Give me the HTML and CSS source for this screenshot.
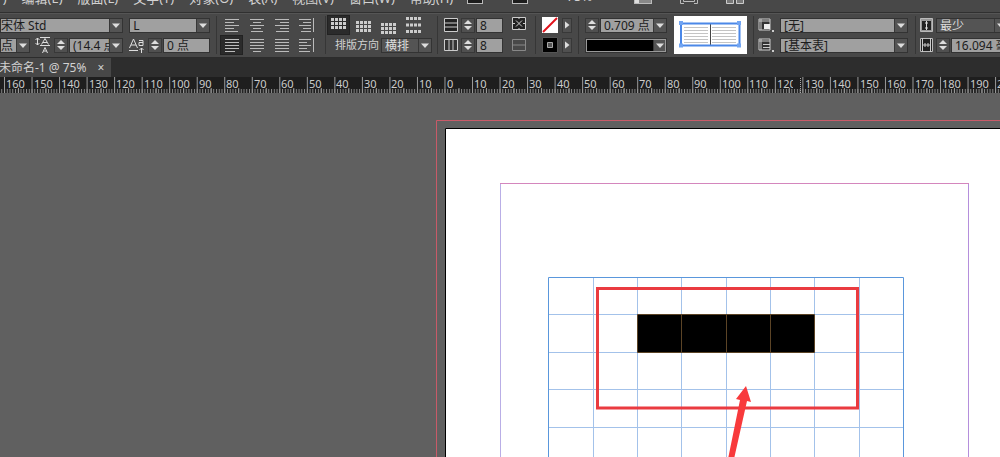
FILE: index.html
```html
<!DOCTYPE html>
<html lang="zh-CN">
<head>
<meta charset="utf-8">
<title>未命名-1 @ 75%</title>
<link rel="stylesheet" href="styles.css">
</head>
<body>
<div class="app">
  <header class="menubar">
    <nav class="menus">
      <button>文件(F)</button><button>编辑(E)</button><button>版面(L)</button><button>文字(T)</button><button>对象(O)</button><button>表(A)</button><button>视图(V)</button><button>窗口(W)</button><button>帮助(H)</button>
    </nav>
    <div class="apps">
      <button aria-label="Bridge"><svg width="16" height="16"><rect x=".5" y=".5" width="15" height="15" fill="#1c1c1c" stroke="#bbb"/></svg></button>
      <button aria-label="Stock"><svg width="16" height="16"><rect x=".5" y=".5" width="15" height="15" fill="#1c1c1c" stroke="#bbb"/></svg></button>
    </div>
    <button class="zoom">75%</button>
    <div class="views">
      <button aria-label="视图选项"><svg width="18" height="16"><rect x=".5" y=".5" width="17" height="15" fill="#888" stroke="#bbb"/><path d="M1 15h4v-4H1z" fill="#ddd"/></svg></button>
      <button aria-label="屏幕模式"><svg width="18" height="16" fill="none" stroke="#bbb"><path d="M3.500 0v13.500h11V0M.5 12v3.500H4M17.500 12v3.500H14"/></svg></button>
      <button aria-label="排列文档"><svg width="18" height="16"><path d="M.5.5h7v15h-7zM10.500.5h7v15h-7z" fill="#777" stroke="#ccc"/></svg></button>
    </div>
  </header>

  <section class="toolbar">
    <div class="group type">
      <div class="row">
        <select class="combo family" aria-label="字体"><option>宋体 Std</option></select>
        <select class="combo weight" aria-label="字体样式"><option>L</option></select>
      </div>
      <div class="row">
        <select class="combo size" aria-label="字体大小"><option>点</option></select>
        <svg class="glyph" width="16" height="16" fill="none" stroke="#ddd"><path d="M5 .5h10M5 8.500h10M2.500 1v7M.5 3l2-2 2 2M.5 6l2 2 2-2M6.500 7.500 10 1.500l3.500 6M8 5.500h4M7.500 16 10 10.500l2.500 5.500M8.500 14h3"/></svg>
        <span class="spin"><button aria-label="增加行距"></button><button aria-label="减少行距"></button></span>
        <select class="combo leading" aria-label="行距"><option>(14.4 点)</option></select>
        <svg class="glyph kern" width="16" height="16" fill="none" stroke="#ddd"><path d="M.5 11 4.500 2l4 9M2 8h5M0 13.500h9M10 3.500h4v5h-4v-3h4M12.500 16v-5M10.500 13l2-2 2 2"/></svg>
        <span class="spin"><button aria-label="上移基线"></button><button aria-label="下移基线"></button></span>
        <input class="field shift" aria-label="基线偏移" value="0 点">
      </div>
    </div>

    <div class="group align">
      <div class="row">
        <button aria-label="左对齐"><svg width="14" height="14"><path d="M0 1.500h14M0 4.500h9M0 7.500h14M0 10.500h9M0 13.500h13"/></svg></button>
        <button aria-label="居中对齐"><svg width="14" height="14"><path d="M0 1.500h14M3 4.500h8M0 7.500h14M3 10.500h8M1 13.500h12"/></svg></button>
        <button aria-label="右对齐"><svg width="14" height="14"><path d="M0 1.500h14M5 4.500h9M0 7.500h14M5 10.500h9M1 13.500h13"/></svg></button>
        <button aria-label="朝向书脊对齐"><svg width="16" height="14"><path d="M0 1.500h12M4 4.500h8M0 7.500h12M4 10.500h8M2 13.500h10M14.500 0v14"/></svg></button>
      </div>
      <div class="row">
        <button class="on" aria-label="双齐末行齐左"><svg width="14" height="14"><path d="M0 1.500h14M0 4.500h14M0 7.500h14M0 10.500h14M0 13.500h10"/></svg></button>
        <button aria-label="双齐末行居中"><svg width="14" height="14"><path d="M0 1.500h14M0 4.500h14M0 7.500h14M0 10.500h14M3 13.500h8"/></svg></button>
        <button aria-label="全部强制双齐"><svg width="14" height="14"><path d="M0 1.500h14M0 4.500h14M0 7.500h14M0 10.500h14M0 13.500h14"/></svg></button>
        <button aria-label="背向书脊对齐"><svg width="16" height="14"><path d="M0 1.500h12M0 4.500h8M0 7.500h12M0 10.500h8M0 13.500h11M14.500 0v14"/></svg></button>
      </div>
    </div>

    <div class="group cells">
      <div class="row">
        <button class="on" aria-label="上对齐"><svg width="16" height="16"><path d="M0 2.500h16M0 6.500h16M0 10.500h16"/></svg></button>
        <button aria-label="居中对齐单元格"><svg width="16" height="16"><path d="M0 5.500h16M0 9.500h16M0 13.500h16"/></svg></button>
        <button aria-label="下对齐"><svg width="16" height="18"><path d="M0 8.500h16M0 12.500h16M0 16.500h16"/></svg></button>
        <button aria-label="撑满"><svg width="16" height="18"><path d="M0 2.500h16M0 9h16M0 15.500h16"/></svg></button>
      </div>
      <div class="row">
        <label for="dir">排版方向</label>
        <select id="dir" class="combo dark dir"><option>横排</option></select>
      </div>
    </div>

    <div class="group counts">
      <div class="row">
        <svg class="glyph" width="14" height="14" fill="#222" stroke="#ccc"><path d="M.5.5h13v13H.5zM0 5h14M0 9h14"/></svg>
        <span class="spin"><button aria-label="增加行数"></button><button aria-label="减少行数"></button></span>
        <input class="field count" aria-label="行数" value="8">
        <button class="plain" aria-label="合并单元格"><svg width="14" height="16" fill="none" stroke="#ccc"><path d="M.5.5h13v12H.5z" fill="#222"/><path d="m4 3.500 6 6M10 3.500l-6 6M0 6.500h3M11 6.500h3M7 0v2M7 11v2"/></svg></button>
      </div>
      <div class="row">
        <svg class="glyph" width="14" height="14" fill="#333" stroke="#ccc"><path d="M.5 1.500h13v11H.5zM5 1v12M9 1v12"/></svg>
        <span class="spin"><button aria-label="增加列数"></button><button aria-label="减少列数"></button></span>
        <input class="field count" aria-label="列数" value="8">
        <button class="plain" aria-label="取消合并单元格"><svg width="14" height="14" fill="none" stroke="#888"><path d="M.5 1.500h13v11H.5zM0 7h14"/></svg></button>
      </div>
    </div>

    <div class="group paint">
      <div class="row">
        <button class="plain" aria-label="填色"><svg width="16" height="16"><path d="M0 0h16v16H0z" fill="#fff"/><path d="M1 15 15 1" stroke="#e2121c" stroke-width="2"/></svg></button>
        <button class="more" aria-label="填色选项"></button>
      </div>
      <div class="row">
        <button class="plain" aria-label="描边"><svg width="16" height="16"><path d="M.5.5h15v15H.5z" stroke="#555"/><path d="M5.500 5.500h5v5h-5z" fill="#555" stroke="#aaa"/></svg></button>
        <button class="more" aria-label="描边选项"></button>
      </div>
    </div>

    <div class="group stroke">
      <div class="row">
        <span class="spin"><button aria-label="增加粗细"></button><button aria-label="减少粗细"></button></span>
        <select class="combo points" aria-label="描边粗细"><option>0.709 点</option></select>
      </div>
      <div class="row">
        <select class="combo line" aria-label="描边类型"><option>实底</option></select>
      </div>
    </div>

    <button class="preview" aria-label="表边框"><svg width="73" height="38">
      <path d="M0 0h73v38H0z" fill="#fff"/>
      <path d="M10 11.500h24M10 14.500h24M10 17.500h24M10 20.500h24M10 23.500h24M10 26.500h24M38 11.500h24M38 14.500h24M38 17.500h24M38 20.500h24M38 23.500h24M38 26.500h24" stroke="#c4c4c4"/>
      <path d="M36.500 7v23" stroke="#444"/><path d="M7 7.500h58.500v22H7z" fill="none" stroke="#4b88e8" stroke-width="2"/>
      <path d="M5 5h4v4H5zM63 5h4v4h-4zM5 27.500h4v4H5zM63 27.500h4v4h-4z" fill="#72a5f2"/>
    </svg></button>

    <div class="group styles">
      <div class="row">
        <svg class="glyph" width="17" height="14"><path d="M1 1h11v11H1z" fill="#333" stroke="#ccc"/><path d="M1 3h11M3 1v11" stroke="#ccc"/><path d="M6 6h6v5H6z" fill="#eee"/><path d="M14 12h2v2h-2z" fill="#ccc"/></svg>
        <select class="combo style" aria-label="单元格样式"><option>[无]</option></select>
      </div>
      <div class="row">
        <svg class="glyph" width="17" height="14"><path d="M1 1h11v11H1z" fill="#333" stroke="#ccc"/><path d="M1 3h11M3 1v11M5 6.500h7M5 9.500h7" stroke="#ccc"/><path d="M14 12h2v2h-2z" fill="#ccc"/></svg>
        <select class="combo style" aria-label="表样式"><option>[基本表]</option></select>
      </div>
    </div>

    <div class="group extent">
      <div class="row">
        <svg class="glyph" width="13" height="14"><path d="M.5.5h12v13H.5z" fill="#999" stroke="#bbb"/><path d="M2 3h9v9H2z" fill="#222"/><path d="M6.500 3v9M5 5h3M5 10h3" stroke="#ddd"/></svg>
        <select class="combo dark height" aria-label="行高"><option>最少</option></select>
      </div>
      <div class="row">
        <svg class="glyph" width="13" height="14"><path d="M.5.5h12v13H.5z" fill="#222" stroke="#bbb"/><path d="M2.500 0v14M10.500 0v14M3 7h7M5 5v4M8 5v4" stroke="#ccc"/></svg>
        <span class="spin"><button aria-label="增加列宽"></button><button aria-label="减少列宽"></button></span>
        <input class="field width" aria-label="列宽" value="16.094 毫米">
      </div>
    </div>
  </section>

  <div class="tabs">
    <div class="tab"><span>未命名-1 @ 75%</span><button aria-label="关闭">×</button></div>
  </div>

  <svg class="ruler" aria-label="标尺">
    <defs>
      <pattern id="minor" x="4" width="2.753" height="16" patternUnits="userSpaceOnUse"><path d="M.5 12v4" stroke="#888"/></pattern>
      <pattern id="half" x="18" width="27.53" height="16" patternUnits="userSpaceOnUse"><path d="M.5 11v5" stroke="#999"/></pattern>
      <pattern id="major" x="4" width="27.53" height="16" patternUnits="userSpaceOnUse"><path d="M.5 0v16" stroke="#999"/></pattern>
    </defs>
    <rect width="100%" height="16" fill="url(#minor)"/>
    <rect width="100%" height="16" fill="url(#half)"/>
    <rect width="100%" height="16" fill="url(#major)"/>
    <g class="marks">
      <text x="6" y="11">160</text><text x="34" y="11">150</text><text x="61" y="11">140</text><text x="89" y="11">130</text><text x="116" y="11">120</text><text x="144" y="11">110</text><text x="171" y="11">100</text><text x="199" y="11">90</text><text x="226" y="11">80</text><text x="254" y="11">70</text><text x="281" y="11">60</text><text x="309" y="11">50</text><text x="336" y="11">40</text><text x="364" y="11">30</text><text x="391" y="11">20</text><text x="419" y="11">10</text>
      <text x="447" y="11">0</text><text x="474" y="11">10</text><text x="502" y="11">20</text><text x="529" y="11">30</text><text x="557" y="11">40</text><text x="584" y="11">50</text><text x="612" y="11">60</text><text x="639" y="11">70</text><text x="667" y="11">80</text><text x="694" y="11">90</text><text x="722" y="11">100</text><text x="749" y="11">110</text><text x="777" y="11">120</text><text x="805" y="11">130</text><text x="832" y="11">140</text><text x="860" y="11">150</text><text x="887" y="11">160</text><text x="915" y="11">170</text><text x="942" y="11">180</text><text x="970" y="11">190</text><text x="997" y="11">200</text>
    </g>
    <path d="M793 0h9v12h-9z" fill="#1e1e1e"/>
    <path d="M800.500 1v15" stroke="#aaa" stroke-dasharray="1 1"/>
  </svg>

  <main class="workspace">
    <svg class="sheet" aria-label="文档页面">
      <path d="M436.500 2000V27.500H3000" fill="none" stroke="#c85a68"/>
      <path d="M445.500 2000V35.500H3000V2000z" fill="#fff" stroke="#000"/>
      <path d="M500.500 2000V90" stroke="#b9aee6"/>
      <path d="M968.500 2000V90" stroke="#b58fdc"/>
      <path d="M500 90.500h469" stroke="#d486bd"/>
      <g fill="none" stroke="#a3c2ea">
        <path d="M593.500 184v2000M637.500 184v2000M681.500 184v2000M726.500 184v2000M770.500 184v2000M814.500 184v2000M859.500 184v2000"/>
        <path d="M548 221.500h355M548 259.500h355M548 296.500h355M548 334.500h355"/>
        <path d="M548.500 2000V184.500h355V2000" stroke="#5a97dc"/>
      </g>
      <path d="M637.500 221.500h177v38h-177z" fill="#000" stroke="#5c4426"/>
      <path d="M681.500 222v37M726.500 222v37M770.500 222v37" stroke="#5c4426"/>
      <path d="M597.500 195.500h260v119.500h-260z" fill="none" stroke="#ea3b40" stroke-width="3"/>
      <path d="M746 293 751 309 747 308 734 366H728L740 307 736 306z" fill="#f83a3c"/>
    </svg>
  </main>
</div>
</body>
</html>
```
FILE: styles.css
```css
* { box-sizing: border-box; }

body {
  margin: 0;
  background: #606060;
  color: #d2d2d2;
  font: 13px/16px "Noto Sans", "Noto Sans CJK SC", sans-serif;
}

button, select, input {
  margin: 0;
  padding: 0;
  border: 0;
  border-radius: 0;
  background: none;
  color: inherit;
  font: inherit;
}

svg { display: block; flex: none; }

.app {
  display: flex;
  flex-direction: column;
  height: 100vh;
  overflow: hidden;
}

.menubar {
  display: flex;
  flex: none;
  align-items: flex-end;
  height: 13px;
  padding-bottom: 8px;
  background: #484848;
  border-bottom: 1px solid #303030;
  white-space: nowrap;
}

.menus { display: flex; flex: none; gap: 15px; width: 501px; margin: 0 0 -2px -34px; }
.apps { display: flex; gap: 29px; }
.zoom { width: 106px; padding-right: 3px; }
.views { display: flex; gap: 28px; }

.toolbar {
  display: flex;
  flex: none;
  height: 45px;
  padding-top: 2px;
  background: #484848;
  border-top: 1px solid #555;
  border-bottom: 1px solid #2c2c2c;
  font-size: 12px;
  white-space: nowrap;
}

.group {
  display: flex;
  flex: none;
  flex-direction: column;
  gap: 4px;
  height: 38px;
  padding: 1px 6px;
  border-left: 1px solid #363636;
}

.row { display: flex; align-items: center; height: 16px; }
.glyph { margin-right: 3px; }

.type { width: 216px; padding-left: 0; border-left: 0; }
.align { width: 109px; padding: 1px 4px; }
.cells { width: 112px; padding: 1px 2px; }
.counts { width: 98px; }
.paint { width: 43px; }
.stroke { width: 96px; }
.styles { width: 162px; margin-left: 6px; padding: 1px 4px; }
.extent { flex: 1; padding: 1px 0 0 4px; }

.combo, .field {
  height: 15px;
  padding: 0 0 0 3px;
  border: 1px solid #333;
  background-color: #a0a0a0;
  color: #1c1c1c;
  line-height: 13px;
  overflow: hidden;
}

.combo {
  appearance: none;
  padding-right: 13px;
  background-image: url("data:image/svg+xml,%3Csvg xmlns='http://www.w3.org/2000/svg' width='13' height='13'%3E%3Cpath d='M0 0h13v13H0z' fill='%23545454'/%3E%3Cpath d='M.5 0v13' stroke='%23383838'/%3E%3Cpath d='M3 4.500h8L7 9z' fill='%23ddd'/%3E%3C/svg%3E");
  background-position: right center;
  background-repeat: no-repeat;
}

.dark { background-color: #545454; color: #ddd; }
.family { width: 124px; margin-right: 6px; padding-left: 0; }
.weight { width: 81px; }
.size { width: 32px; margin-right: 5px; padding-left: 0; }
.leading { width: 54px; margin-right: 6px; }
.shift { width: 47px; }
.dir { width: 51px; }
.count { width: 27px; margin-right: 9px; }
.points { width: 67px; }
.style { width: 128px; margin-left: 2px; }
.height { width: 72px; }
.width { width: 60px; }

.spin {
  display: flex;
  flex: none;
  flex-direction: column;
  justify-content: center;
  align-items: center;
  gap: 2px;
  width: 14px;
  height: 15px;
  margin-right: 1px;
  border: 1px solid #383838;
  background: #505050;
}

.spin button {
  width: 8px;
  height: 4px;
  background: #ddd;
  clip-path: polygon(50% 0, 100% 100%, 0 100%);
}

.spin button + button { clip-path: polygon(0 0, 100% 0, 50% 100%); }

.align .row button, .cells .row button {
  display: flex;
  align-items: center;
  justify-content: center;
  width: 21px;
  height: 18px;
  margin-right: 4px;
}

.align path { stroke: #bbb; }
.cells path { stroke: #ccc; stroke-width: 3; stroke-dasharray: 3 1; }
.align .row .on, .cells .row .on { background: #2b2b2b; box-shadow: 0 0 0 1px #222; }
.cells label { width: 53px; padding-left: 7px; font-size: 11px; }

.more {
  width: 13px;
  height: 15px;
  margin-left: 4px;
  border: 1px solid #383838;
  background: #505050;
}

.more::before {
  display: block;
  width: 5px;
  height: 8px;
  margin: 0 auto;
  background: #ddd;
  clip-path: polygon(0 0, 100% 50%, 0 100%);
  content: "";
}

.line {
  width: 82px;
  color: transparent;
  background-color: #000;
  box-shadow: inset 0 0 0 1px #999;
}

.preview { flex: none; height: 38px; }

.tabs {
  display: flex;
  flex: none;
  height: 19px;
  background: #2d2d2d;
}

.tab {
  display: flex;
  align-items: center;
  gap: 11px;
  width: 111px;
  padding-top: 1px;
  background: #474747;
  font-size: 12px;
  white-space: nowrap;
}

.tab span { margin-left: -1px; }

.ruler {
  width: 100%;
  height: 16px;
  background: #1e1e1e;
}

.marks { fill: #ccc; font-size: 11px; }

.workspace { flex: 1; min-height: 0; }
.sheet { width: 100%; height: 100%; }
```
